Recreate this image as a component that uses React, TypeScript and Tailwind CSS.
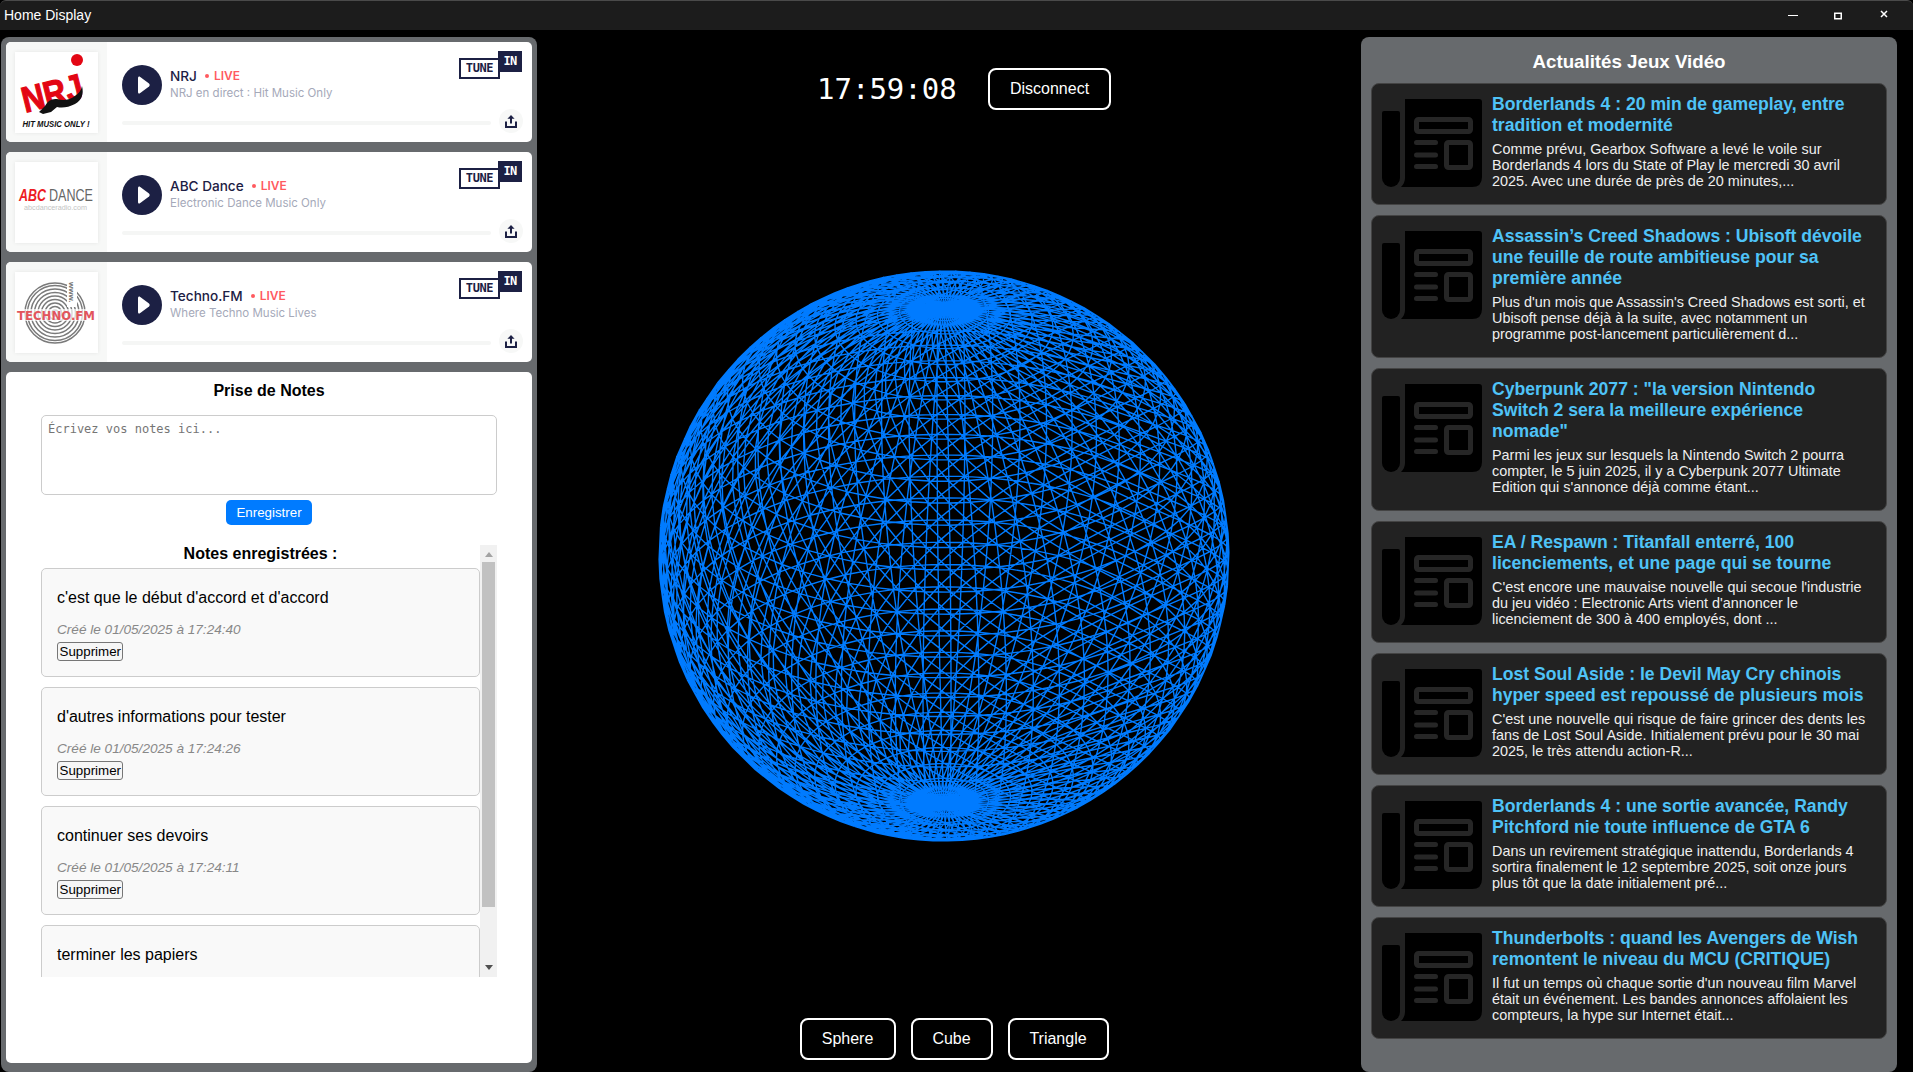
const stations = [
  { name: 'NRJ', desc: 'NRJ en direct : Hit Music Only', logo: 'nrj' },
  { name: 'ABC Dance', desc: 'Electronic Dance Music Only', logo: 'abc' },
  { name: 'Techno.FM', desc: 'Where Techno Music Lives', logo: 'techno' },
];

const notes = [
  { text: "c'est que le début d'accord et d'accord", date: 'Créé le 01/05/2025 à 17:24:40' },
  { text: "d'autres informations pour tester", date: 'Créé le 01/05/2025 à 17:24:26' },
  { text: 'continuer ses devoirs', date: 'Créé le 01/05/2025 à 17:24:11' },
  // the rest of this one is scrolled out of the list
  { text: 'terminer les papiers', date: '' },
];

const news = [
  {
    title: 'Borderlands 4 : 20 min de gameplay, entre tradition et modernité',
    desc: 'Comme prévu, Gearbox Software a levé le voile sur Borderlands 4 lors du State of Play le mercredi 30 avril 2025. Avec une durée de près de 20 minutes,...',
  },
  {
    title: 'Assassin’s Creed Shadows : Ubisoft dévoile une feuille de route ambitieuse pour sa première année',
    desc: "Plus d'un mois que Assassin's Creed Shadows est sorti, et Ubisoft pense déjà à la suite, avec notamment un programme post-lancement particulièrement d...",
  },
  {
    title: 'Cyberpunk 2077 : "la version Nintendo Switch 2 sera la meilleure expérience nomade"',
    desc: "Parmi les jeux sur lesquels la Nintendo Switch 2 pourra compter, le 5 juin 2025, il y a Cyberpunk 2077 Ultimate Edition qui s'annonce déjà comme étant...",
  },
  {
    title: 'EA / Respawn : Titanfall enterré, 100 licenciements, et une page qui se tourne',
    desc: "C'est encore une mauvaise nouvelle qui secoue l'industrie du jeu vidéo : Electronic Arts vient d'annoncer le licenciement de 300 à 400 employés, dont ...",
  },
  {
    title: 'Lost Soul Aside : le Devil May Cry chinois hyper speed est repoussé de plusieurs mois',
    desc: "C'est une nouvelle qui risque de faire grincer des dents les fans de Lost Soul Aside. Initialement prévu pour le 30 mai 2025, le très attendu action-R...",
  },
  {
    title: 'Borderlands 4 : une sortie avancée, Randy Pitchford nie toute influence de GTA 6',
    desc: 'Dans un revirement stratégique inattendu, Borderlands 4 sortira finalement le 12 septembre 2025, soit onze jours plus tôt que la date initialement pré...',
  },
  {
    title: 'Thunderbolts : quand les Avengers de Wish remontent le niveau du MCU (CRITIQUE)',
    desc: "Il fut un temps où chaque sortie d'un nouveau film Marvel était un événement. Les bandes annonces affolaient les compteurs, la hype sur Internet était...",
  },
];

// wireframe sphere, same topology as a three.js SphereGeometry
function buildSpherePath(radius: number, segW: number, segH: number, tilt: number, spin: number) {
  const project = (i: number, j: number) => {
    const theta = (j / segH) * Math.PI;
    const phi = (i / segW) * Math.PI * 2 + spin;
    const x = radius * Math.sin(theta) * Math.cos(phi);
    const y = radius * Math.cos(theta);
    const z = radius * Math.sin(theta) * Math.sin(phi);
    const y2 = y * Math.cos(tilt) - z * Math.sin(tilt);
    return `${(radius + 1 + x).toFixed(1)} ${(radius + 1 - y2).toFixed(1)}`;
  };
  let d = '';
  for (let j = 0; j < segH; j++) {
    for (let i = 0; i < segW; i++) {
      const a = project(i, j);
      const b = project(i + 1, j);
      const c = project(i, j + 1);
      d += `M${a}L${b}M${a}L${c}M${b}L${c}`;
    }
  }
  return d;
}

// a quarter step of spin keeps the front and back meridians from landing on each other
const spherePath = buildSpherePath(285, 64, 40, 0.52, -0.0245);

function NrjLogo() {
  return (
    <svg viewBox="0 0 83 81" className="w-full h-full">
      <circle cx="62" cy="8" r="6" fill="#e30613" />
      <g transform="rotate(-14 40 40)">
        <text x="6" y="53" fontFamily="Liberation Sans" fontWeight="700" fontSize="36" fill="#e30613" stroke="#e30613" strokeWidth="1.2" textLength="62" lengthAdjust="spacingAndGlyphs">
          NRJ
        </text>
      </g>
      <path d="M24 60 L30 54 Q34 46 42 47 Q52 50 60 44 Q66 40 67 34 Q70 46 60 52 Q50 57 42 55 L36 60 L28 62 Z" fill="#111" />
      <text x="41" y="75" textAnchor="middle" fontFamily="Liberation Sans" fontWeight="700" fontStyle="italic" fontSize="9" fill="#111" textLength="67" lengthAdjust="spacingAndGlyphs">
        HIT MUSIC ONLY !
      </text>
    </svg>
  );
}

function AbcLogo() {
  return (
    <svg viewBox="0 0 83 81" className="w-full h-full">
      <text x="4" y="39" fontFamily="Liberation Sans" fontWeight="700" fontStyle="italic" fontSize="16" fill="#ed1c24" textLength="27" lengthAdjust="spacingAndGlyphs">
        ABC
      </text>
      <text x="34" y="39" fontFamily="Liberation Sans" fontSize="16" fill="#666" textLength="44" lengthAdjust="spacingAndGlyphs">
        DANCE
      </text>
      <text x="9" y="48" fontFamily="Liberation Sans" fontSize="7" fill="#c4c4c4" textLength="63" lengthAdjust="spacingAndGlyphs">
        abcdanceradio.com
      </text>
    </svg>
  );
}

function TechnoLogo() {
  const rings = [3, 6.5, 10, 13.5, 17, 20.5, 24, 27.5, 30];
  return (
    <svg viewBox="0 0 83 81" className="w-full h-full">
      {rings.map((r) => (
        <circle key={r} cx="40" cy="41" r={r} fill="none" stroke="#7a7a7a" strokeWidth="1.5" />
      ))}
      <rect x="52" y="8" width="10" height="27" fill="#fff" />
      <text x="0" y="0" transform="translate(54 10) rotate(90)" fontFamily="Liberation Sans" fontWeight="700" fontSize="8" fill="#777">
        www.
      </text>
      <rect x="0" y="37" width="83" height="12" fill="#fff" fillOpacity="0.7" />
      <text x="2" y="48" fontFamily="DejaVu Sans" fontWeight="700" fontSize="12" fill="#e2555c" textLength="78" lengthAdjust="spacingAndGlyphs">
        TECHNO.FM
      </text>
    </svg>
  );
}

function TuneInLogo() {
  return (
    <div className="relative w-[63px] h-[28px] shrink-0 font-['DejaVu_Sans_Mono',monospace] font-bold">
      <div className="absolute left-0 top-[7px] w-[41px] h-[21px] border-2 border-[#1c2044] bg-white text-[#1c2044] text-[12px] tracking-[-0.4px] leading-[17px] text-center">
        TUNE
      </div>
      <div className="absolute left-[39px] top-0 w-[24px] h-[21px] bg-[#1c2044] text-white text-[12px] tracking-[-0.6px] leading-[21px] text-center">
        IN
      </div>
    </div>
  );
}

function NewsIcon() {
  return (
    <svg viewBox="0 0 100 88" className="w-[100px] h-[88px] shrink-0 mt-[5px]">
      <path d="M2 12 H16 Q18 12 18 14 V79 A9 9 0 0 1 0 79 V14 Q0 12 2 12 Z" fill="#000" />
      <path d="M23 0 H97 Q100 0 100 3 V78 Q100 88 90 88 H19 Q23 84 23 79 Z" fill="#000" />
      <rect x="34.5" y="20.5" width="54" height="12" rx="2" fill="none" stroke="#262626" strokeWidth="5" />
      <rect x="32" y="41" width="24" height="5" rx="2.5" fill="#262626" />
      <rect x="32" y="53.5" width="24" height="5" rx="2.5" fill="#262626" />
      <rect x="32" y="65" width="24" height="5" rx="2.5" fill="#262626" />
      <rect x="64.5" y="43.5" width="24" height="25" rx="2" fill="none" stroke="#262626" strokeWidth="5" />
    </svg>
  );
}

function StationCard({ station }: { station: (typeof stations)[number] }) {
  return (
    <div className="flex h-[100px] bg-white rounded-[5px] overflow-hidden">
      <div className="w-[101px] shrink-0 bg-[#f7f8f7] pl-[9px] pt-[10px]">
        <div className="w-[83px] h-[81px] bg-white shadow-[0_0_4px_rgba(0,0,0,0.08)]">
          {station.logo === 'nrj' && <NrjLogo />}
          {station.logo === 'abc' && <AbcLogo />}
          {station.logo === 'techno' && <TechnoLogo />}
        </div>
      </div>
      <div className="flex-1 flex flex-col pl-[15px] pr-[9px] pt-[9px] font-['Inter',sans-serif]">
        <div className="flex items-start h-[58px] pr-px">
          <div className="w-[40px] h-[40px] mt-[14px] rounded-full bg-[#1c2044] flex items-center justify-center shrink-0">
            <svg viewBox="0 0 12 18" className="w-[12px] h-[18px] ml-[3px]">
              <path d="M1.6 0.6 L11 7.6 Q12.4 9 11 10.4 L1.6 17.4 Q0 18 0 16 V2 Q0 0 1.6 0.6 Z" fill="#fff" />
            </svg>
          </div>
          <div className="ml-[8px] mt-[15px]">
            <div className="flex items-center h-[20px]">
              <span className="text-[13.6px] font-medium text-[#1c2044]">{station.name}</span>
              <span className="w-[4px] h-[4px] rounded-full bg-[#ff5a5f] ml-[8px] mr-[5px]" />
              <span className="text-[12px] font-semibold text-[#ff5a5f]">LIVE</span>
            </div>
            <div className="text-[11.5px] leading-[16px] -mt-px text-[#a5a9b9]">{station.desc}</div>
          </div>
          <div className="ml-auto">
            <TuneInLogo />
          </div>
        </div>
        <div className="flex items-center gap-[8px] h-[24px]">
          <div className="flex-1 h-[4px] rounded-full bg-[#f5f6f5] mt-[3px]" />
          <div className="w-[24px] h-[24px] rounded-full bg-[#f7f8f7] flex items-center justify-center">
            <svg viewBox="0 0 12 13" className="w-[12px] h-[13px]">
              <path d="M6 0 L9.6 3.8 H7 V8.6 H5 V3.8 H2.4 Z" fill="#1c2044" />
              <path d="M0 6.5 H2 V11 H10 V6.5 H12 V13 H0 Z" fill="#1c2044" />
            </svg>
          </div>
        </div>
      </div>
    </div>
  );
}

function NoteCard({ note }: { note: (typeof notes)[number] }) {
  return (
    <div className="h-[109px] mb-[10px] shrink-0 border border-[#ccc] rounded-[5px] bg-[#f9f9f9] px-[15px] pt-[20px]">
      <div className="text-[16px] leading-[18px] text-black">{note.text}</div>
      {note.date && (
        <>
          <div className="text-[13.6px] leading-[15px] mt-[15px] italic text-[#888]">{note.date}</div>
          <button className="block mt-[5px] h-[19px] px-[1.5px] border border-[#767676] rounded-[3px] bg-[#f6f6f6] text-[13.33px] leading-[15px] text-black">
            Supprimer
          </button>
        </>
      )}
    </div>
  );
}

function NewsCard({ item }: { item: (typeof news)[number] }) {
  return (
    <div className="flex items-start gap-[10px] border border-[#444] rounded-[8px] bg-[#222] pl-[10px] pr-[10px] pt-[10px] pb-[15px]">
      <NewsIcon />
      <div className="flex-1 min-w-0">
        <div className="text-[17.6px] leading-[21px] font-bold text-[#4fc3f7]">{item.title}</div>
        <div className="text-[14.4px] leading-[16px] mt-[5px] text-[#eee]">{item.desc}</div>
      </div>
    </div>
  );
}

function ShapeButton({ label, width }: { label: string; width: string }) {
  return (
    <button className={`${width} h-[42px] border-2 border-white rounded-[8px] bg-black text-white text-[16px]`}>
      {label}
    </button>
  );
}

export default function App() {
  return (
    <div className="h-screen w-full flex flex-col overflow-hidden bg-black font-['Liberation_Sans',Arial,sans-serif]">
      <div className="h-[30px] shrink-0 flex items-center bg-[#1c1c1c] border-t border-[#4a4a4a] rounded-t-[6px] pl-[4px] text-white text-[14px]">
        <span>Home Display</span>
        <div className="ml-auto flex items-center text-white">
          <svg viewBox="0 0 10 8" className="w-[10px] h-[8px] mr-[36px]">
            <rect x="0" y="3" width="10" height="1" fill="#fff" />
          </svg>
          <svg viewBox="0 0 8 8" className="w-[8px] h-[8px] mr-[38px]">
            <rect x="0.75" y="1.25" width="6.5" height="5.5" fill="none" stroke="#fff" strokeWidth="1.5" />
          </svg>
          <svg viewBox="0 0 8 8" className="w-[8px] h-[8px] mr-[25px] mb-[3px]">
            <path d="M1 1 L7 7 M7 1 L1 7" stroke="#fff" strokeWidth="1.5" />
          </svg>
        </div>
      </div>

      <div className="flex-1 min-h-0 flex pt-[7px]">
        <div className="ml-px w-[536px] shrink-0 flex flex-col rounded-[8px] bg-[#676a6d] px-[5px] pt-[5px] pb-[9px]">
          <div className="flex flex-col gap-[10px]">
            {stations.map((s) => (
              <StationCard key={s.name} station={s} />
            ))}
          </div>
          <div className="flex-1 min-h-0 mt-[10px] flex flex-col bg-white rounded-[5px] px-[35px] pt-[10px]">
            <h2 className="text-[16px] leading-[18px] font-bold text-center text-black">Prise de Notes</h2>
            <textarea
              placeholder="Écrivez vos notes ici..."
              className="block w-full h-[80px] mt-[15px] px-[6px] pt-[6px] pb-[4px] border border-[#ccc] rounded-[5px] resize-none font-['DejaVu_Sans_Mono',monospace] text-[12px] leading-[14px] placeholder:text-[#757575] outline-none"
            />
            <button className="self-center w-[86px] h-[25px] mt-[5px] rounded-[5px] bg-[#007bff] text-white text-[13.33px]">
              Enregistrer
            </button>
            <div className="flex h-[432px] mt-[20px]">
              <div className="flex-1 min-w-0 overflow-hidden flex flex-col">
                <h3 className="text-[16px] leading-[18px] mb-[5px] font-bold text-center text-black">
                  Notes enregistrées :
                </h3>
                {notes.map((n) => (
                  <NoteCard key={n.text} note={n} />
                ))}
              </div>
              <div className="w-[17px] shrink-0 flex flex-col items-center bg-[#f1f1f1]">
                <svg viewBox="0 0 8 5" className="w-[8px] h-[5px] mt-[7px] mb-[5px] shrink-0">
                  <path d="M4 0 L8 5 H0 Z" fill="#a3a3a3" />
                </svg>
                <div className="w-[13px] h-[345px] bg-[#c1c1c1]" />
                <svg viewBox="0 0 8 5" className="w-[8px] h-[5px] mt-auto mb-[7px] shrink-0">
                  <path d="M0 0 H8 L4 5 Z" fill="#505050" />
                </svg>
              </div>
            </div>
          </div>
        </div>

        <div className="flex-1 min-w-0 flex flex-col">
          <div className="flex items-center h-[42px] mt-[31px] pl-[280px]">
            <span className="w-[139px] font-['DejaVu_Sans_Mono',monospace] text-[29px] leading-none text-white">17:59:08</span>
            <button className="ml-[32px] w-[123px] h-[42px] border-2 border-white rounded-[8px] bg-black text-white text-[16px]">
              Disconnect
            </button>
          </div>
          <div className="flex justify-center pr-[10px] mt-[160px]">
            <svg viewBox="0 0 572 572" className="w-[572px] h-[572px] shrink-0">
              <path d={spherePath} fill="none" stroke="#007bff" strokeWidth="1.4" />
            </svg>
          </div>
          <div className="flex justify-center gap-[15px] pl-[10px] mt-[176px]">
            <ShapeButton label="Sphere" width="w-[96px]" />
            <ShapeButton label="Cube" width="w-[82px]" />
            <ShapeButton label="Triangle" width="w-[101px]" />
          </div>
        </div>

        <div className="w-[536px] shrink-0 mr-[16px] flex flex-col rounded-[8px] bg-[#676a6d] px-[10px] pt-[14px]">
          <h2 className="text-[18.72px] leading-[21px] font-bold text-center text-white mb-[11px]">Actualités Jeux Vidéo</h2>
          <div className="flex flex-col gap-[10px]">
            {news.map((item) => (
              <NewsCard key={item.title} item={item} />
            ))}
          </div>
        </div>
      </div>
    </div>
  );
}
